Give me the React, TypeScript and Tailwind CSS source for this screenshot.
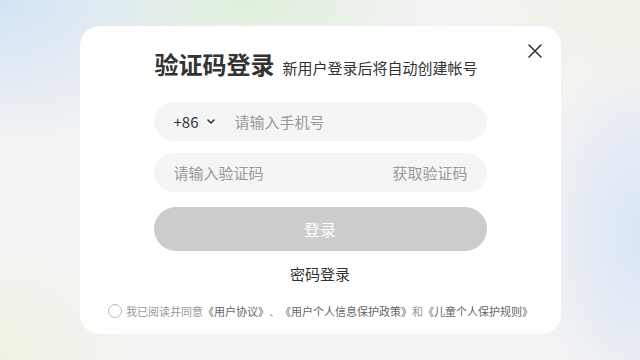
import React from "react";

export default function App() {
  const font = "font-['Noto_Sans_CJK_SC','Noto_Sans',sans-serif]";
  return (
    <div
      className={`${font} w-[640px] h-[360px] flex items-center justify-center bg-[#f3f3f3] bg-[radial-gradient(ellipse_220px_150px_at_0%_0%,#d3e3f4_0%,rgba(243,243,243,0)_100%),radial-gradient(ellipse_200px_90px_at_38%_0%,#dff0dc_0%,rgba(243,243,243,0)_100%),radial-gradient(ellipse_200px_120px_at_100%_0%,#f2f1e6_0%,rgba(243,243,243,0)_100%),radial-gradient(ellipse_140px_120px_at_0%_100%,#f1f1e2_0%,rgba(243,243,243,0)_100%),radial-gradient(ellipse_110px_190px_at_100%_65%,#d9e5f6_0%,rgba(243,243,243,0)_100%)]`}
    >
      <div className="relative w-[481px] h-[308px] bg-white rounded-[20px] flex flex-col items-center pt-[26px]">
        <button className="absolute top-[18px] right-[19px] w-[14px] h-[14px] text-[#333]">
          <svg viewBox="0 0 14 14" width="14" height="14" fill="none" stroke="currentColor" strokeWidth="1.6" strokeLinecap="round">
            <path d="M1 1L13 13M13 1L1 13" />
          </svg>
        </button>

        <div className="w-[333px] flex items-baseline gap-2 pl-px">
          <span className="text-[24px] leading-none font-bold text-[#333]">验证码登录</span>
          <span className="text-[15px] leading-none text-[#333]">新用户登录后将自动创建帐号</span>
        </div>

        <div className="mt-[26px] w-[333px] h-[39px] rounded-full bg-[#f5f5f5] flex items-center pl-5">
          <span className="text-[15px] text-[#333] leading-none">+86</span>
          <svg className="ml-[9px]" width="8" height="5" viewBox="0 0 8 5" fill="none" stroke="#333" strokeWidth="1.6" strokeLinecap="round" strokeLinejoin="round">
            <path d="M1 1L4 4L7 1" />
          </svg>
          <span className="ml-[19px] text-[15px] text-[#999] leading-none">请输入手机号</span>
        </div>

        <div className="mt-[12px] w-[333px] h-[39px] rounded-full bg-[#f5f5f5] flex items-center justify-between pl-5 pr-[19px]">
          <span className="text-[15px] text-[#999] leading-none">请输入验证码</span>
          <span className="text-[15px] text-[#999] leading-none">获取验证码</span>
        </div>

        <button className="mt-[15px] w-[333px] h-[44px] rounded-full bg-[#cccccc] text-white text-[16px] leading-none flex items-center justify-center">
          登录
        </button>

        <div className="mt-[15px] text-[15px] leading-none text-[#333]">密码登录</div>

        <div className="mt-[23px] flex items-center text-[11px] leading-none pl-[1px]">
          <span className="w-[14px] h-[14px] rounded-full border border-[#bbb] mr-[4px] box-border"></span>
          <span className="text-[#999]">我已阅读并同意</span>
          <span className="text-[#666]">《用户协议》</span>
          <span className="text-[#999]">、</span>
          <span className="text-[#666]">《用户个人信息保护政策》</span>
          <span className="text-[#999]">和</span>
          <span className="text-[#666]">《儿童个人保护规则》</span>
        </div>
      </div>
    </div>
  );
}
